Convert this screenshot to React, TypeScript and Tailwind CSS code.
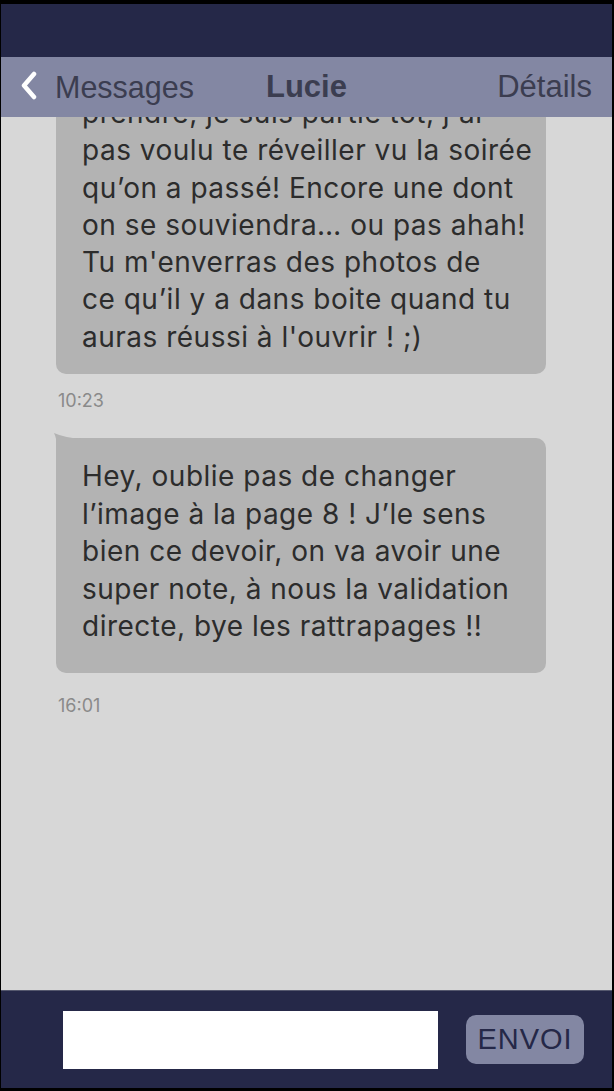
import React from "react";

const bubbleFont = { fontFamily: "Inter, 'Noto Sans', sans-serif" };
const uiFont = { fontFamily: "'Liberation Sans', Arial, sans-serif" };

export default function App() {
  const b1 = [
    "prendre, je suis partie tôt, j'ai",
    "pas voulu te réveiller vu la soirée",
    "qu’on a passé! Encore une dont",
    "on se souviendra… ou pas ahah!",
    "Tu m'enverras des photos de",
    "ce qu’il y a dans boite quand tu",
    "auras réussi à l'ouvrir ! ;)",
  ];
  const b2 = [
    "Hey, oublie pas de changer",
    "l’image à la page 8 ! J’le sens",
    "bien ce devoir, on va avoir une",
    "super note, à nous la validation",
    "directe, bye les rattrapages !!",
  ];
  return (
    <div className="w-[614px] h-[1091px] bg-black flex flex-col pt-[4px] pb-[3px] pl-[1px] pr-[2px] overflow-hidden">
      <div className="h-[53px] bg-[#252848] shrink-0" />
      <div
        className="h-[60px] bg-[#8387a3] shrink-0 flex items-center relative text-[#3b3d50]"
        style={uiFont}
      >
        <svg
          width="20"
          height="30"
          viewBox="0 0 20 30"
          className="absolute left-[18px] top-[14px]"
        >
          <path
            d="M15 3 L5 14.5 L15 26"
            fill="none"
            stroke="white"
            strokeWidth="4.5"
            strokeLinecap="round"
            strokeLinejoin="round"
          />
        </svg>
        <span className="absolute left-[54px] top-[13px] text-[30.5px] leading-[34px]">Messages</span>
        <span className="absolute left-[265px] top-[13px] text-[31px] leading-[34px] font-bold">Lucie</span>
        <span className="absolute right-[20px] top-[13px] text-[31px] leading-[34px]">Détails</span>
      </div>
      <div className="flex-1 bg-[#d7d7d7] overflow-hidden flex flex-col pl-[55px]" style={bubbleFont}>
        <div className="w-[490px] bg-[#b3b3b3] rounded-[10px] mt-[-40px] pl-[26px] pt-[18px] pb-[18px] text-[28px] tracking-[0.5px] leading-[37.3px] text-[#2c2c2c]">
          {b1.map((l, i) => (
            <div key={i} className="whitespace-nowrap">{l}</div>
          ))}
        </div>
        <div className="mt-[16px] ml-[2px] text-[18px] leading-[22px] text-[#8a8a8a]">10:23</div>
        <div className="relative w-[490px] bg-[#b3b3b3] rounded-[10px] rounded-tl-none mt-[26px] pl-[26px] pt-[20px] pb-[27px] text-[28px] tracking-[0.5px] leading-[37.6px] text-[#2c2c2c]">
          <svg width="30" height="7" viewBox="0 0 30 7" className="absolute left-[-3px] top-[-6px]">
            <path d="M1 1 Q2.5 4 3 7 L30 7 Q12 6 1 1 Z" fill="#b3b3b3" />
          </svg>
          {b2.map((l, i) => (
            <div key={i} className="whitespace-nowrap">{l}</div>
          ))}
        </div>
        <div className="mt-[22px] ml-[2px] text-[18px] leading-[22px] text-[#8a8a8a]">16:01</div>
      </div>
      <div className="h-[98px] bg-[#252848] shrink-0 border-t border-[#55586e] flex items-center pl-[62px] pr-[28px]">
        <div className="w-[375px] h-[58px] bg-white" />
        <div
          className="ml-[28px] w-[118px] h-[49px] rounded-[10px] bg-[#8387a3] flex items-center justify-center text-[29px] text-[#252848] tracking-[1px]"
          style={uiFont}
        >
          ENVOI
        </div>
      </div>
    </div>
  );
}
